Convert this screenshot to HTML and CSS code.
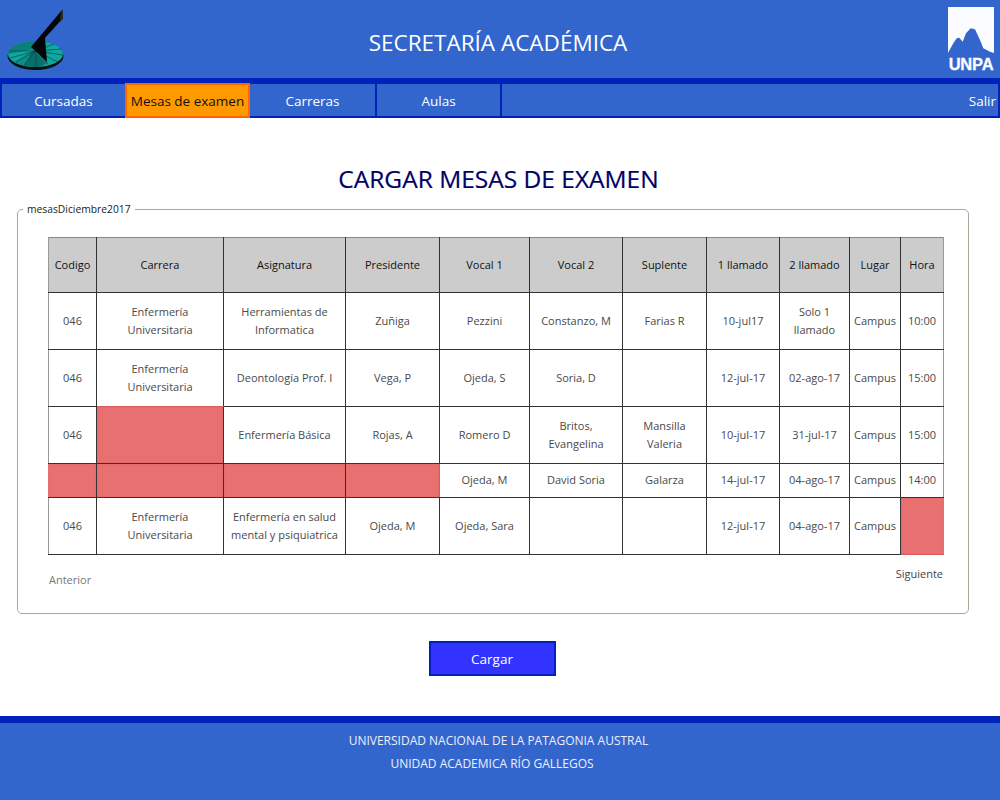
FILE: index.html
```html
<!DOCTYPE html>
<html lang="es">
<head>
<meta charset="utf-8">
<title>Secretaría Académica</title>
<link rel="stylesheet" href="styles.css">
</head>
<body>
<header class="top">
  <svg class="sundial" width="70" height="78" viewBox="0 0 70 78">
    <ellipse cx="35.5" cy="56" rx="28" ry="14" fill="#06120f"/>
    <ellipse cx="35.5" cy="54" rx="27.5" ry="13" fill="#0fa8a0"/>
    <path d="M8 54A27.5 13 0 0 1 36 41L34 49Z" fill="#0b7f7b"/>
    <path d="M34 50L14 62Q24 67 36 67L48 64Z" fill="#0c8f8a"/>
    <path d="M33 50L24 66Q30 67 40 67L46 63Z" fill="#0a6f6c"/>
    <path d="M36 51L9 51M36 51L10 58M36 51L16 62M36 51L24 65M36 51L36 67M36 51L48 64M36 51L58 62M36 51L63 55M36 51L62 49M36 51L54 44" stroke="#07484a" stroke-width="0.7" fill="none"/>
    <path d="M31 47L62 10L63 18L45 38L47 62Z" fill="#050505"/>
    <path d="M61 11L63 10V19L60 22Z" fill="#2a2a2a"/>
  </svg>
  <h1 class="title">SECRETARÍA ACADÉMICA</h1>
  <div class="unpa">
    <svg class="unpa-mark" width="46" height="50" viewBox="0 0 46 50">
      <path d="M0 0H46V46L42 44.7L35.3 41.3L32 33L27 22.3L22.7 21.3L18 26.3L14.7 34.7L11.3 30.7L8.7 31.3L5.3 36.3L0 46Z" fill="#fbfcff"/>
    </svg>
    <span class="unpa-text">UNPA</span>
  </div>
</header>
<nav class="nav">
  <a class="tab">Cursadas</a>
  <a class="tab active">Mesas de examen</a>
  <a class="tab">Carreras</a>
  <a class="tab">Aulas</a>
  <a class="tab exit">Salir</a>
</nav>
<main class="main">
  <h2 class="heading">CARGAR MESAS DE EXAMEN</h2>
  <fieldset class="box">
    <legend class="legend">mesasDiciembre2017</legend>
    <table class="grid">
      <colgroup>
        <col class="c1"><col class="c2"><col class="c3"><col class="c4"><col class="c5"><col class="c6"><col class="c7"><col class="c8"><col class="c9"><col class="c10"><col class="c11">
      </colgroup>
      <thead>
        <tr><th>Codigo</th><th>Carrera</th><th>Asignatura</th><th>Presidente</th><th>Vocal 1</th><th>Vocal 2</th><th>Suplente</th><th>1 llamado</th><th>2 llamado</th><th>Lugar</th><th>Hora</th></tr>
      </thead>
      <tbody>
        <tr class="tall"><td>046</td><td class="above-err">Enfermería Universitaria</td><td>Herramientas de Informatica</td><td>Zuñiga</td><td>Pezzini</td><td>Constanzo, M</td><td>Farias R</td><td>10-jul17</td><td>Solo 1 llamado</td><td>Campus</td><td>10:00</td></tr>
        <tr class="tall"><td>046</td><td class="above-err">Enfermería Universitaria</td><td>Deontología Prof. I</td><td>Vega, P</td><td>Ojeda, S</td><td>Soria, D</td><td></td><td>12-jul-17</td><td>02-ago-17</td><td>Campus</td><td>15:00</td></tr>
        <tr class="tall"><td>046</td><td class="err"></td><td>Enfermería Básica</td><td>Rojas, A</td><td>Romero D</td><td>Britos, Evangelina</td><td>Mansilla Valeria</td><td>10-jul-17</td><td>31-jul-17</td><td>Campus</td><td>15:00</td></tr>
        <tr class="short"><td class="err edge-left"></td><td class="err"></td><td class="err"></td><td class="err edge-right"></td><td>Ojeda, M</td><td>David Soria</td><td>Galarza</td><td>14-jul-17</td><td>04-ago-17</td><td>Campus</td><td>14:00</td></tr>
        <tr class="tall"><td>046</td><td>Enfermería Universitaria</td><td>Enfermería en salud mental y psiquiatrica</td><td>Ojeda, M</td><td>Ojeda, Sara</td><td></td><td></td><td>12-jul-17</td><td>04-ago-17</td><td>Campus</td><td class="err edge-corner"></td></tr>
      </tbody>
    </table>
    <div class="pager">
      <span class="prev">Anterior</span>
      <span class="next">Siguiente</span>
    </div>
  </fieldset>
  <div class="actions"><button class="submit">Cargar</button></div>
</main>
<footer class="foot">
  <p>UNIVERSIDAD NACIONAL DE LA PATAGONIA AUSTRAL</p>
  <p class="foot-second">UNIDAD ACADEMICA RÍO GALLEGOS</p>
</footer>
</body>
</html>
```
FILE: styles.css
```css
* { box-sizing: border-box; }
html, body { margin: 0; padding: 0; }
body { width: 1000px; height: 800px; overflow: hidden; background: #fff; font-family: "Open Sans", "Noto Sans", sans-serif; color: #333; display: flex; flex-direction: column; }
.top { height: 78px; background: #3366cc; display: flex; align-items: center; }
.sundial { flex: none; display: block; }
.title { flex: 1; margin: 0; text-align: center; font-size: 22.5px; font-weight: 400; color: #fff; padding: 6px 22px 0 0; }
.unpa { flex: none; width: 52px; height: 78px; padding-top: 7px; display: flex; flex-direction: column; align-items: flex-start; }
.unpa-mark { display: block; }
.unpa-text { width: 46px; text-align: center; font-family: "Liberation Sans", sans-serif; font-weight: 700; font-size: 16.5px; line-height: 15px; letter-spacing: -0.2px; color: #fbfcff; -webkit-text-stroke: 0.3px #fbfcff; }
.nav { height: 40px; background: #3366cc; border-top: 5px solid #0022bb; display: flex; }
.tab { width: 125px; height: 35px; padding-top: 1px; border-style: solid; border-color: #0022bb; border-width: 1px 2px 2px 0; display: flex; align-items: center; justify-content: center; color: #fff; font-size: 13.5px; white-space: nowrap; }
.tab:first-child { border-width: 1px 0 2px 2px; }
.tab:nth-child(3) { width: 127px; }
.tab.active { background: #ff9900; color: #111; border: 2px solid #ff6600; padding-top: 0; }
.tab.exit { flex: 1; justify-content: flex-end; padding-right: 2px; }
.main { flex: 1; display: flex; flex-direction: column; }
.heading { margin: 42px 0 0; height: 37px; line-height: 37px; text-align: center; font-size: 24.5px; font-weight: 400; color: #000066; -webkit-text-stroke: 0.2px #000066; padding-right: 3px; }
.box { margin: 5px 31px 0 17px; padding: 21px 24px 0 0; height: 412px; border: 1px solid #a8a89a; border-radius: 5px; min-width: 0; }
.legend { margin-left: 5px; padding: 0 4px; font-size: 10.3px; line-height: 14px; color: #222; }
.grid { margin-left: 30px; width: 895px; table-layout: fixed; border-collapse: collapse; font-size: 11px; line-height: 18px; color: #4a4a4a; text-align: center; border-bottom: 1px solid #999; }
.c1 { width: 48px; } .c2 { width: 127px; } .c3 { width: 122px; } .c4 { width: 94px; } .c5 { width: 90px; } .c6 { width: 93px; } .c7 { width: 84px; } .c8 { width: 73px; } .c9 { width: 70px; } .c10 { width: 51px; } .c11 { width: 43px; }
.grid th { height: 55px; background: #cccccc; font-weight: 400; color: #111; border: 1px solid #333; border-top-color: #888; font-size: 11px; padding: 0; }
.grid td { border: 1px solid #333; padding: 0 3px; vertical-align: middle; }
.grid th:first-child, .grid td:first-child { border-left-color: #999; }
.grid th:last-child, .grid td:last-child { border-right: 1px solid #999; padding: 0; }
.grid td:nth-child(10) { padding: 0; }
.tall { height: 57px; }
.short { height: 34px; }
.grid .short td { padding-bottom: 2px; }
.grid td.err { background: #e97070; box-shadow: inset 0 0 1px #d44; }
.grid tr:nth-child(2) td.above-err { border-bottom-color: #d65c5c; }
.grid td.edge-left { border-left-color: #e97070; }
.grid td.edge-right { border-right-color: #d65c5c; }
.grid td.edge-corner { border-right-color: #e97070; border-bottom-color: #d65c5c; }
.pager { display: flex; justify-content: space-between; margin: 12px 0 0 30px; padding-left: 1px; font-size: 11px; line-height: 14px; width: 895px; }
.prev { color: #777; margin-top: 6px; }
.next { color: #444; }
.actions { display: flex; justify-content: center; margin-top: 27px; padding-right: 16px; }
.submit { width: 127px; height: 35px; background: #3333ff; border: 2px solid #0022bb; color: #fff; font: 13.5px "Open Sans", "Noto Sans", sans-serif; padding: 0; }
.foot { height: 84px; background: #3366cc; border-top: 7px solid #0022bb; color: #eef; text-align: center; font-size: 12px; padding-top: 7px; padding-right: 3px; }
.foot p { margin: 0; line-height: 22.5px; }
.foot .foot-second { padding-right: 13px; }
```
